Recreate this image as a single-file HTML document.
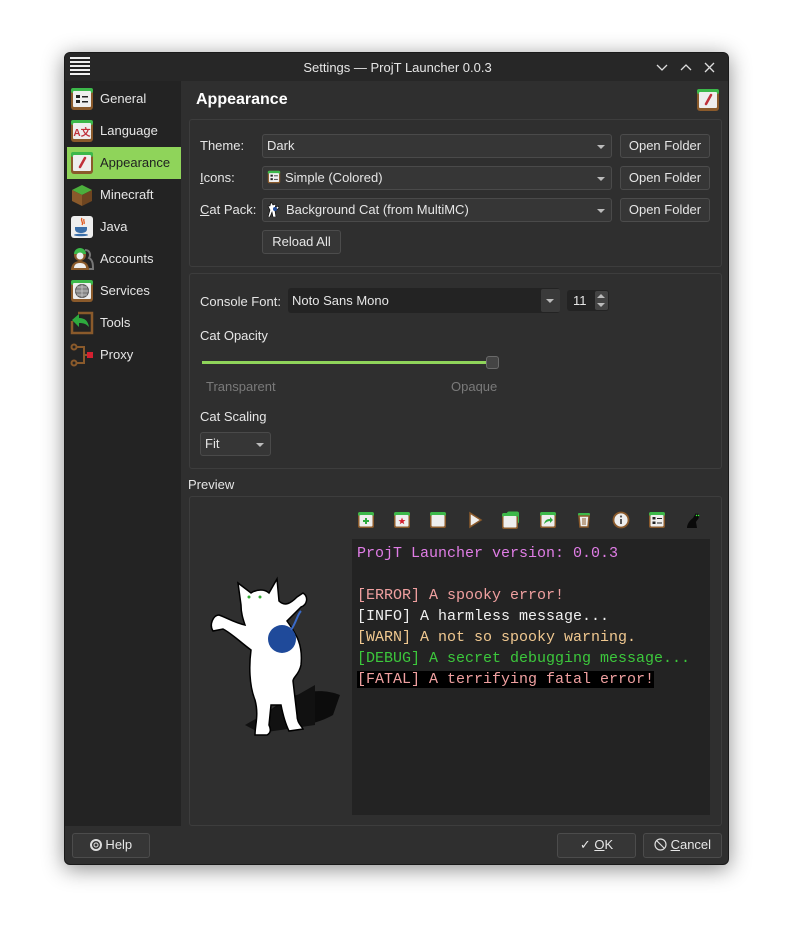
<!DOCTYPE html>
<html><head><meta charset="utf-8"><style>
*{box-sizing:border-box;margin:0;padding:0}
body{width:793px;height:941px;background:#fff;font-family:"Liberation Sans",sans-serif;font-size:13px;color:#e6e6e6;position:relative;overflow:hidden}
.a{position:absolute}
.win{left:64px;top:52px;width:665px;height:813px;background:#2f2f2f;border-radius:6px;box-shadow:0 4px 22px rgba(0,0,0,.45);overflow:hidden;border:1px solid #1a1a1a}
.title{left:0;top:0;width:665px;height:28px;background:#272727}
.side{left:0;top:28px;width:116px;height:745px;background:#232323}
.item{position:absolute;left:2px;width:114px;height:32px}
.item span{position:absolute;left:33px;top:8px;font-size:13px}
.item svg{position:absolute;left:3px;top:4px}
.gb{border:1px solid #3d3d3d;border-radius:3px}
.btn{background:#363636;border:1px solid #4c4c4c;border-radius:3px;text-align:center;line-height:22px;font-size:13px}
.cb{background:#363636;border:1px solid #4a4a4a;border-radius:3px;line-height:22px;padding-left:4px}
.arr{position:absolute;right:6px;top:10px;width:0;height:0;border-left:4px solid transparent;border-right:4px solid transparent;border-top:4px solid #bbb}
.con{font-family:"Liberation Mono",monospace;font-size:15px;line-height:21px;white-space:pre}
.tb{position:absolute;top:9px}
</style></head><body>
<svg width="0" height="0" style="position:absolute">
 <defs>
  <g id="tile"><rect x="1" y="1" width="22" height="22" rx="3" fill="#8a5a2b"/><rect x="1" y="1" width="22" height="5" rx="2" fill="#3cb84a"/><rect x="3" y="4" width="18" height="16" rx="1" fill="#eee"/></g>
  <g id="stile"><rect x="1" y="1" width="16" height="16" rx="2" fill="#8a5a2b"/><rect x="1" y="1" width="16" height="4" rx="2" fill="#3cb84a"/><rect x="2.5" y="4" width="13" height="11.5" rx="1" fill="#eee"/></g>
 </defs>
</svg>
<div class="a win">
 <div class="a title">
  <div class="a" style="left:5px;top:4px;width:20px;height:20px;background:repeating-linear-gradient(#eee 0 2px,#222 2px 4px)"></div>
  <div class="a" style="left:0;width:665px;top:7px;text-align:center;font-size:13px">Settings — ProjT Launcher 0.0.3</div>
  <svg class="a" style="left:590px;top:8px" width="70" height="14" viewBox="0 0 70 14" fill="none" stroke="#ddd" stroke-width="1.3"><path d="M2 4l5 5 5-5"/><path d="M26 9l5-5 5 5"/><path d="M50 2l9 9M59 2l-9 9"/></svg>
 </div>
 <div class="a side">
  <div class="item" style="top:2px"><svg width="24" height="24"><use href="#tile"/><rect x="6" y="8" width="4" height="3" fill="#222"/><rect x="12" y="9" width="6" height="1.5" fill="#222"/><rect x="6" y="13" width="4" height="3" fill="#222"/><rect x="12" y="14" width="6" height="1.5" fill="#222"/></svg><span>General</span></div>
  <div class="item" style="top:34px"><svg width="24" height="24"><use href="#tile"/><text x="12" y="17" text-anchor="middle" font-size="10" font-weight="bold" fill="#c0303a" font-family="Liberation Sans,Noto Sans CJK SC,sans-serif">A文</text></svg><span>Language</span></div>
  <div class="item" style="top:66px;background:#8fd45a;color:#222"><svg width="24" height="24"><use href="#tile"/><path d="M15 7l-5 9" stroke="#c0303a" stroke-width="2.5" stroke-linecap="round"/></svg><span>Appearance</span></div>
  <div class="item" style="top:98px"><svg width="24" height="24"><path d="M12 2l10 5-10 5-10-5z" fill="#4caf3c"/><path d="M2 7l10 5v11L2 18z" fill="#8a5a2b"/><path d="M22 7l-10 5v11l10-5z" fill="#6e4520"/></svg><span>Minecraft</span></div>
  <div class="item" style="top:130px"><svg width="24" height="24"><rect x="1" y="1" width="22" height="22" rx="3" fill="#eee"/><path d="M12 3c-2 3 2 4 0 7M14 4c-1 2 1 3 0 5" stroke="#e05a20" stroke-width="1.3" fill="none"/><path d="M5 12h12v2c0 3-3 4-6 4s-6-1-6-4z" fill="#3a6ea8"/><ellipse cx="11" cy="20" rx="7" ry="1.2" fill="#3a6ea8"/></svg><span>Java</span></div>
  <div class="item" style="top:162px"><svg width="24" height="24"><path d="M15 3c5 0 6 5 4 8 4 2 4 7 4 11h-4" fill="none" stroke="#777" stroke-width="2"/><circle cx="10" cy="8" r="6" fill="#8a5a2b"/><path d="M4 7a6 6 0 0112 0" fill="#3cb84a"/><circle cx="10" cy="9" r="3.5" fill="#eee"/><path d="M1 23c0-6 4-9 9-9s9 3 9 9z" fill="#8a5a2b"/><path d="M4 21c0-3 2-5 6-5s6 2 6 5z" fill="#eee"/></svg><span>Accounts</span></div>
  <div class="item" style="top:194px"><svg width="24" height="24"><use href="#tile"/><circle cx="12" cy="12" r="6.5" fill="#888" stroke="#555"/><path d="M5.5 12h13M12 5.5v13M7 8h10M7 16h10" stroke="#ccc" stroke-width="0.8"/></svg><span>Services</span></div>
  <div class="item" style="top:226px"><svg width="24" height="24"><path d="M8 2h14v20H2V10" fill="none" stroke="#8a5a2b" stroke-width="2.5"/><path d="M2 9l7-6v4c6 0 9 3 10 9-3-3-5-4-10-4v4z" fill="#2eaa3e"/></svg><span>Tools</span></div>
  <div class="item" style="top:258px"><svg width="24" height="24" fill="none" stroke="#8a5a2b" stroke-width="2"><circle cx="4" cy="4" r="2.5"/><circle cx="4" cy="20" r="2.5"/><path d="M6.5 4H14v16H6.5M14 12h4"/><rect x="17" y="9" width="6" height="6" fill="#d42030" stroke="none"/></svg><span>Proxy</span></div>
 </div>
 <div class="a" style="left:131px;top:38px;font-size:16px;font-weight:bold;color:#fff">Appearance</div>
 <svg class="a" style="left:631px;top:35px" width="24" height="24"><use href="#tile"/><path d="M15 7l-5 9" stroke="#c0303a" stroke-width="2.5" stroke-linecap="round"/></svg>

 <div class="a gb" style="left:124px;top:66px;width:533px;height:148px"></div>
 <div class="a" style="left:135px;top:85px">Theme:</div>
 <div class="a cb" style="left:197px;top:81px;width:350px;height:24px">Dark<div class="arr"></div></div>
 <div class="a btn" style="left:555px;top:81px;width:90px;height:24px">Open Folder</div>
 <div class="a" style="left:135px;top:117px"><u>I</u>cons:</div>
 <div class="a cb" style="left:197px;top:113px;width:350px;height:24px"><svg width="14" height="14" viewBox="0 0 18 18" style="vertical-align:-2px;margin-right:4px"><use href="#stile"/><rect x="4.5" y="6" width="3" height="2.5" fill="#222"/><rect x="4.5" y="10.5" width="3" height="2.5" fill="#222"/><rect x="9" y="7" width="5" height="1" fill="#222"/><rect x="9" y="11.5" width="5" height="1" fill="#222"/></svg>Simple (Colored)<div class="arr"></div></div>
 <div class="a btn" style="left:555px;top:113px;width:90px;height:24px">Open Folder</div>
 <div class="a" style="left:135px;top:149px"><u>C</u>at Pack:</div>
 <div class="a cb" style="left:197px;top:145px;width:350px;height:24px"><svg width="14" height="16" viewBox="0 0 14 16" style="vertical-align:-3px;margin-right:5px"><path d="M4 1l2 3 3-1-1 4 3-2 1 2-4 3 1 6H6l-1-5-2 5H1l2-7-2-4 2 0z" fill="#fff" stroke="#000" stroke-width=".6"/><circle cx="8" cy="8" r="2" fill="#1f4a9a"/></svg>Background Cat (from MultiMC)<div class="arr"></div></div>
 <div class="a btn" style="left:555px;top:145px;width:90px;height:24px">Open Folder</div>
 <div class="a btn" style="left:197px;top:177px;width:79px;height:24px">Reload All</div>

 <div class="a gb" style="left:124px;top:220px;width:533px;height:196px"></div>
 <div class="a" style="left:135px;top:241px">Console Font:</div>
 <div class="a" style="left:223px;top:235px;width:272px;height:25px;background:#232323;border-radius:3px;padding:5px 4px">Noto Sans Mono</div>
 <div class="a" style="left:476px;top:236px;width:19px;height:23px;background:#3a3a3a;border-radius:2px"><div class="arr"></div></div>
 <div class="a" style="left:502px;top:237px;width:42px;height:21px;background:#232323;border-radius:3px;padding:3px 6px">11</div>
 <div class="a" style="left:530px;top:238px;width:13px;height:19px;background:#444;border-radius:2px">
  <div class="a" style="left:2px;top:3px;border-left:4px solid transparent;border-right:4px solid transparent;border-bottom:4px solid #bbb"></div>
  <div class="a" style="left:2px;top:12px;border-left:4px solid transparent;border-right:4px solid transparent;border-top:4px solid #bbb"></div>
 </div>
 <div class="a" style="left:135px;top:275px">Cat Opacity</div>
 <div class="a" style="left:137px;top:308px;width:290px;height:3px;background:#8fd45a"></div>
 <div class="a" style="left:421px;top:303px;width:13px;height:13px;background:#444;border:1px solid #6a6a6a;border-radius:3px"></div>
 <div class="a" style="left:141px;top:326px;color:#7a7a7a">Transparent</div>
 <div class="a" style="left:386px;top:326px;color:#7a7a7a">Opaque</div>
 <div class="a" style="left:135px;top:356px">Cat Scaling</div>
 <div class="a cb" style="left:135px;top:379px;width:71px;height:24px">Fit<div class="arr"></div></div>

 <div class="a" style="left:123px;top:424px">Preview</div>
 <div class="a gb" style="left:124px;top:443px;width:533px;height:330px"></div>
 <div class="a" style="left:287px;top:458px;width:360px;height:20px">
  <svg class="tb" style="left:5px;top:0" width="18" height="18"><use href="#stile"/><path d="M9 7v6M6 10h6" stroke="#2eaa3e" stroke-width="2"/></svg>
  <svg class="tb" style="left:41px;top:0" width="18" height="18"><use href="#stile"/><path d="M9 6.5l1 2.5h2.5l-2 1.6.8 2.6L9 11.7l-2.3 1.6.8-2.6-2-1.6H8z" fill="#d42030"/></svg>
  <svg class="tb" style="left:77px;top:0" width="18" height="18"><use href="#stile"/></svg>
  <svg class="tb" style="left:114px;top:0" width="18" height="18"><path d="M4 2l11 7-11 7z" fill="#eee" stroke="#8a5a2b" stroke-width="1.5"/></svg>
  <svg class="tb" style="left:150px;top:0" width="18" height="18"><rect x="5" y="0.5" width="12" height="12" rx="2" fill="#3cb84a"/><use href="#stile" transform="translate(-1 1)"/></svg>
  <svg class="tb" style="left:187px;top:0" width="18" height="18"><use href="#stile"/><path d="M5 13c1-4 3-5 6-5V6l3 3-3 3v-2c-2 0-4 1-6 3z" fill="#2eaa3e"/></svg>
  <svg class="tb" style="left:223px;top:0" width="18" height="18"><rect x="3" y="2" width="12" height="3" rx="1" fill="#3cb84a"/><path d="M4 5h10l-1 11H5z" fill="#eee" stroke="#8a5a2b" stroke-width="1.5"/><path d="M8 7v7M10 7v7" stroke="#8a5a2b"/></svg>
  <svg class="tb" style="left:260px;top:0" width="18" height="18"><circle cx="9" cy="9" r="7.5" fill="#eee" stroke="#8a5a2b" stroke-width="1.8"/><rect x="8" y="8" width="2" height="5" fill="#555"/><circle cx="9" cy="5.5" r="1.1" fill="#555"/></svg>
  <svg class="tb" style="left:296px;top:0" width="18" height="18"><use href="#stile"/><rect x="4.5" y="6" width="3" height="2.5" fill="#222"/><rect x="4.5" y="10.5" width="3" height="2.5" fill="#222"/><rect x="9" y="7" width="5" height="1" fill="#222"/><rect x="9" y="11.5" width="5" height="1" fill="#222"/></svg>
  <svg class="tb" style="left:333px;top:0" width="18" height="18"><path d="M11 2l1 2 1-2 1 3c0 3-2 4-3 6l1 6H2c0-4 3-8 6-10 1-2 2-3 3-5z" fill="#0a0a0a"/><circle cx="11.5" cy="4.5" r=".7" fill="#3f3"/><circle cx="13.5" cy="4.5" r=".7" fill="#3f3"/></svg>
 </div>
 <svg class="a" style="left:140px;top:522px" width="140" height="170" viewBox="0 0 140 170">
  <path d="M60 140 C80 120 110 110 135 120 L128 140 C110 150 85 155 60 150Z" fill="#0c0c0c"/>
  <path d="M55 158 L40 150 L110 110 L110 150Z" fill="#111"/>
  <path d="M36 30 L33 8 L46 18 C52 14 60 14 64 18 L72 4 L74 26 C80 32 86 28 92 22 L98 18 C104 22 102 30 96 32 L82 46 C92 60 98 70 96 90 C94 100 88 102 88 106 L92 140 C92 148 96 150 98 154 L84 156 C80 148 78 140 76 130 L66 130 L64 150 C66 154 66 158 62 160 L50 160 C50 150 54 140 50 125 C44 110 44 90 46 75 C34 66 26 58 18 54 L8 56 C4 50 8 40 14 40 C20 42 30 48 40 50 C38 44 36 38 36 30Z" fill="#fff" stroke="#000" stroke-width="1.5"/>
  <circle cx="77" cy="64" r="14" fill="#1f4a9a"/>
  <path d="M86 55 C92 46 92 40 96 36" stroke="#3a6ac8" stroke-width="2" fill="none"/>
  <circle cx="44" cy="22" r="1.5" fill="#3a3"/><circle cx="55" cy="22" r="1.5" fill="#3a3"/>
 </svg>
 <div class="a" style="left:287px;top:486px;width:358px;height:276px;background:#232323"></div>
 <div class="a con" style="left:292px;top:490px"><span style="color:#e07de6">ProjT Launcher version: 0.0.3</span>

<span style="color:#f0a0a0">[ERROR] A spooky error!</span>
<span style="color:#f0f0f0">[INFO] A harmless message...</span>
<span style="color:#f0c890">[WARN] A not so spooky warning.</span>
<span style="color:#3cc83c">[DEBUG] A secret debugging message...</span>
<span style="color:#f0a0a0;background:#000">[FATAL] A terrifying fatal error!</span></div>

 <div class="a btn" style="left:7px;top:780px;width:78px;height:25px"><svg width="12" height="12" style="vertical-align:-2px"><circle cx="6" cy="6" r="5" fill="none" stroke="#ddd" stroke-width="2"/><circle cx="6" cy="6" r="2" fill="none" stroke="#ddd"/></svg> Help</div>
 <div class="a btn" style="left:492px;top:780px;width:79px;height:25px">✓ <u>O</u>K</div>
 <div class="a btn" style="left:578px;top:780px;width:79px;height:25px"><svg width="13" height="13" style="vertical-align:-2px"><circle cx="6.5" cy="6.5" r="5.5" fill="none" stroke="#ddd" stroke-width="1.2"/><path d="M3 3l7 7" stroke="#ddd" stroke-width="1.2"/></svg> <u>C</u>ancel</div>
</div>
</body></html>
